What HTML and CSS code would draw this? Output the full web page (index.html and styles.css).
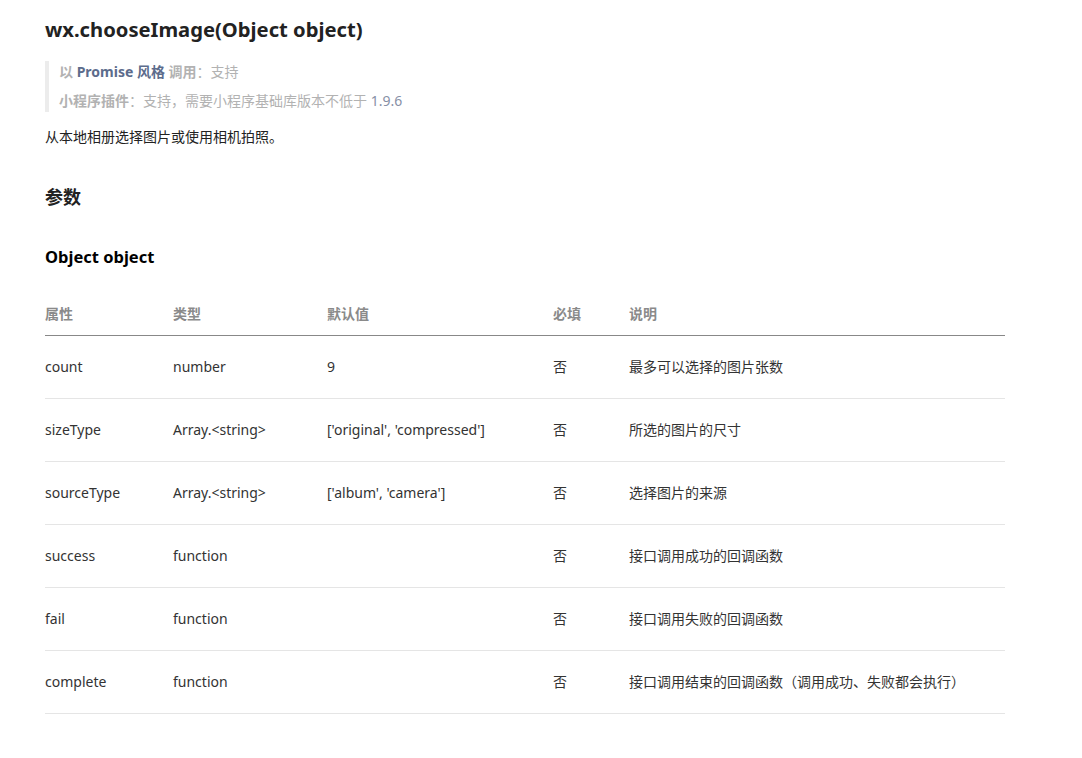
FILE: index.html
```html
<!DOCTYPE html>
<html lang="zh-CN">
<head>
<meta charset="utf-8">
<title>wx.chooseImage</title>
<link rel="stylesheet" href="styles.css">
</head>
<body>
<main class="doc">
  <h1 class="title">wx.chooseImage(Object object)</h1>
  <blockquote class="note">
    <p><strong>以</strong> <a class="link">Promise 风格</a> <strong>调用</strong>：支持</p>
    <p><strong>小程序插件</strong>：支持，需要小程序基础库版本不低于 <a class="ver">1.9.6</a></p>
  </blockquote>
  <p class="desc">从本地相册选择图片或使用相机拍照。</p>
  <h2 class="h2">参数</h2>
  <h3 class="h3">Object object</h3>
  <table class="params">
    <thead>
      <tr>
        <th class="c1">属性</th>
        <th class="c2">类型</th>
        <th class="c3">默认值</th>
        <th class="c4">必填</th>
        <th class="c5">说明</th>
      </tr>
    </thead>
    <tbody>
      <tr><td>count</td><td>number</td><td>9</td><td>否</td><td>最多可以选择的图片张数</td></tr>
      <tr><td>sizeType</td><td>Array.&lt;string&gt;</td><td>['original', 'compressed']</td><td>否</td><td>所选的图片的尺寸</td></tr>
      <tr><td>sourceType</td><td>Array.&lt;string&gt;</td><td>['album', 'camera']</td><td>否</td><td>选择图片的来源</td></tr>
      <tr><td>success</td><td>function</td><td></td><td>否</td><td>接口调用成功的回调函数</td></tr>
      <tr><td>fail</td><td>function</td><td></td><td>否</td><td>接口调用失败的回调函数</td></tr>
      <tr><td>complete</td><td>function</td><td></td><td>否</td><td>接口调用结束的回调函数（调用成功、失败都会执行）</td></tr>
    </tbody>
  </table>
</main>
</body>
</html>
```

FILE: styles.css
```css
html, body {
  margin: 0;
  padding: 0;
  background: #fff;
}
body {
  font-family: "Noto Sans", "Noto Sans CJK SC", sans-serif;
  color: #333;
  font-size: 14px;
}
.doc {
  width: 960px;
  padding: 15px 0 40px 45px;
}
.title {
  margin: 0;
  font-size: 20.2px;
  line-height: 28px;
  font-weight: 700;
  color: #222;
}
.note {
  margin: 18px 0 0 0;
  padding: 0 0 0 10px;
  border-left: 4px solid #ececec;
  display: flex;
  flex-direction: column;
  gap: 7px;
}
.note p {
  margin: 0;
  font-size: 14px;
  line-height: 22px;
  color: #b2b2b2;
}
.note strong {
  font-weight: 700;
  color: #b2b2b2;
}
.note .link {
  font-weight: 700;
  color: #5c6c8c;
}
.note .ver {
  color: #8790a6;
}
.desc {
  margin: 14px 0 0 0;
  font-size: 14px;
  line-height: 22px;
  color: #222;
}
.h2 {
  margin: 36px 0 0 0;
  font-size: 18px;
  line-height: 26px;
  font-weight: 700;
  color: #222;
}
.h3 {
  margin: 35px 0 0 0;
  font-size: 16.5px;
  line-height: 24px;
  font-weight: 700;
  color: #000;
}
.params {
  margin-top: 25px;
  width: 960px;
  border-collapse: collapse;
  table-layout: fixed;
}
.params th {
  text-align: left;
  font-size: 14px;
  font-weight: 700;
  color: #8a8a8a;
  line-height: 20px;
  padding: 10px 0 11px 0;
  border-bottom: 1px solid #888;
}
.params td {
  font-size: 14px;
  color: #333;
  line-height: 22px;
  padding: 20px 0;
  border-bottom: 1px solid #e5e5e5;
  white-space: nowrap;
}
.c1 { width: 128px; }
.c2 { width: 154px; }
.c3 { width: 226px; }
.c4 { width: 76px; }
.c5 { width: auto; }
```
